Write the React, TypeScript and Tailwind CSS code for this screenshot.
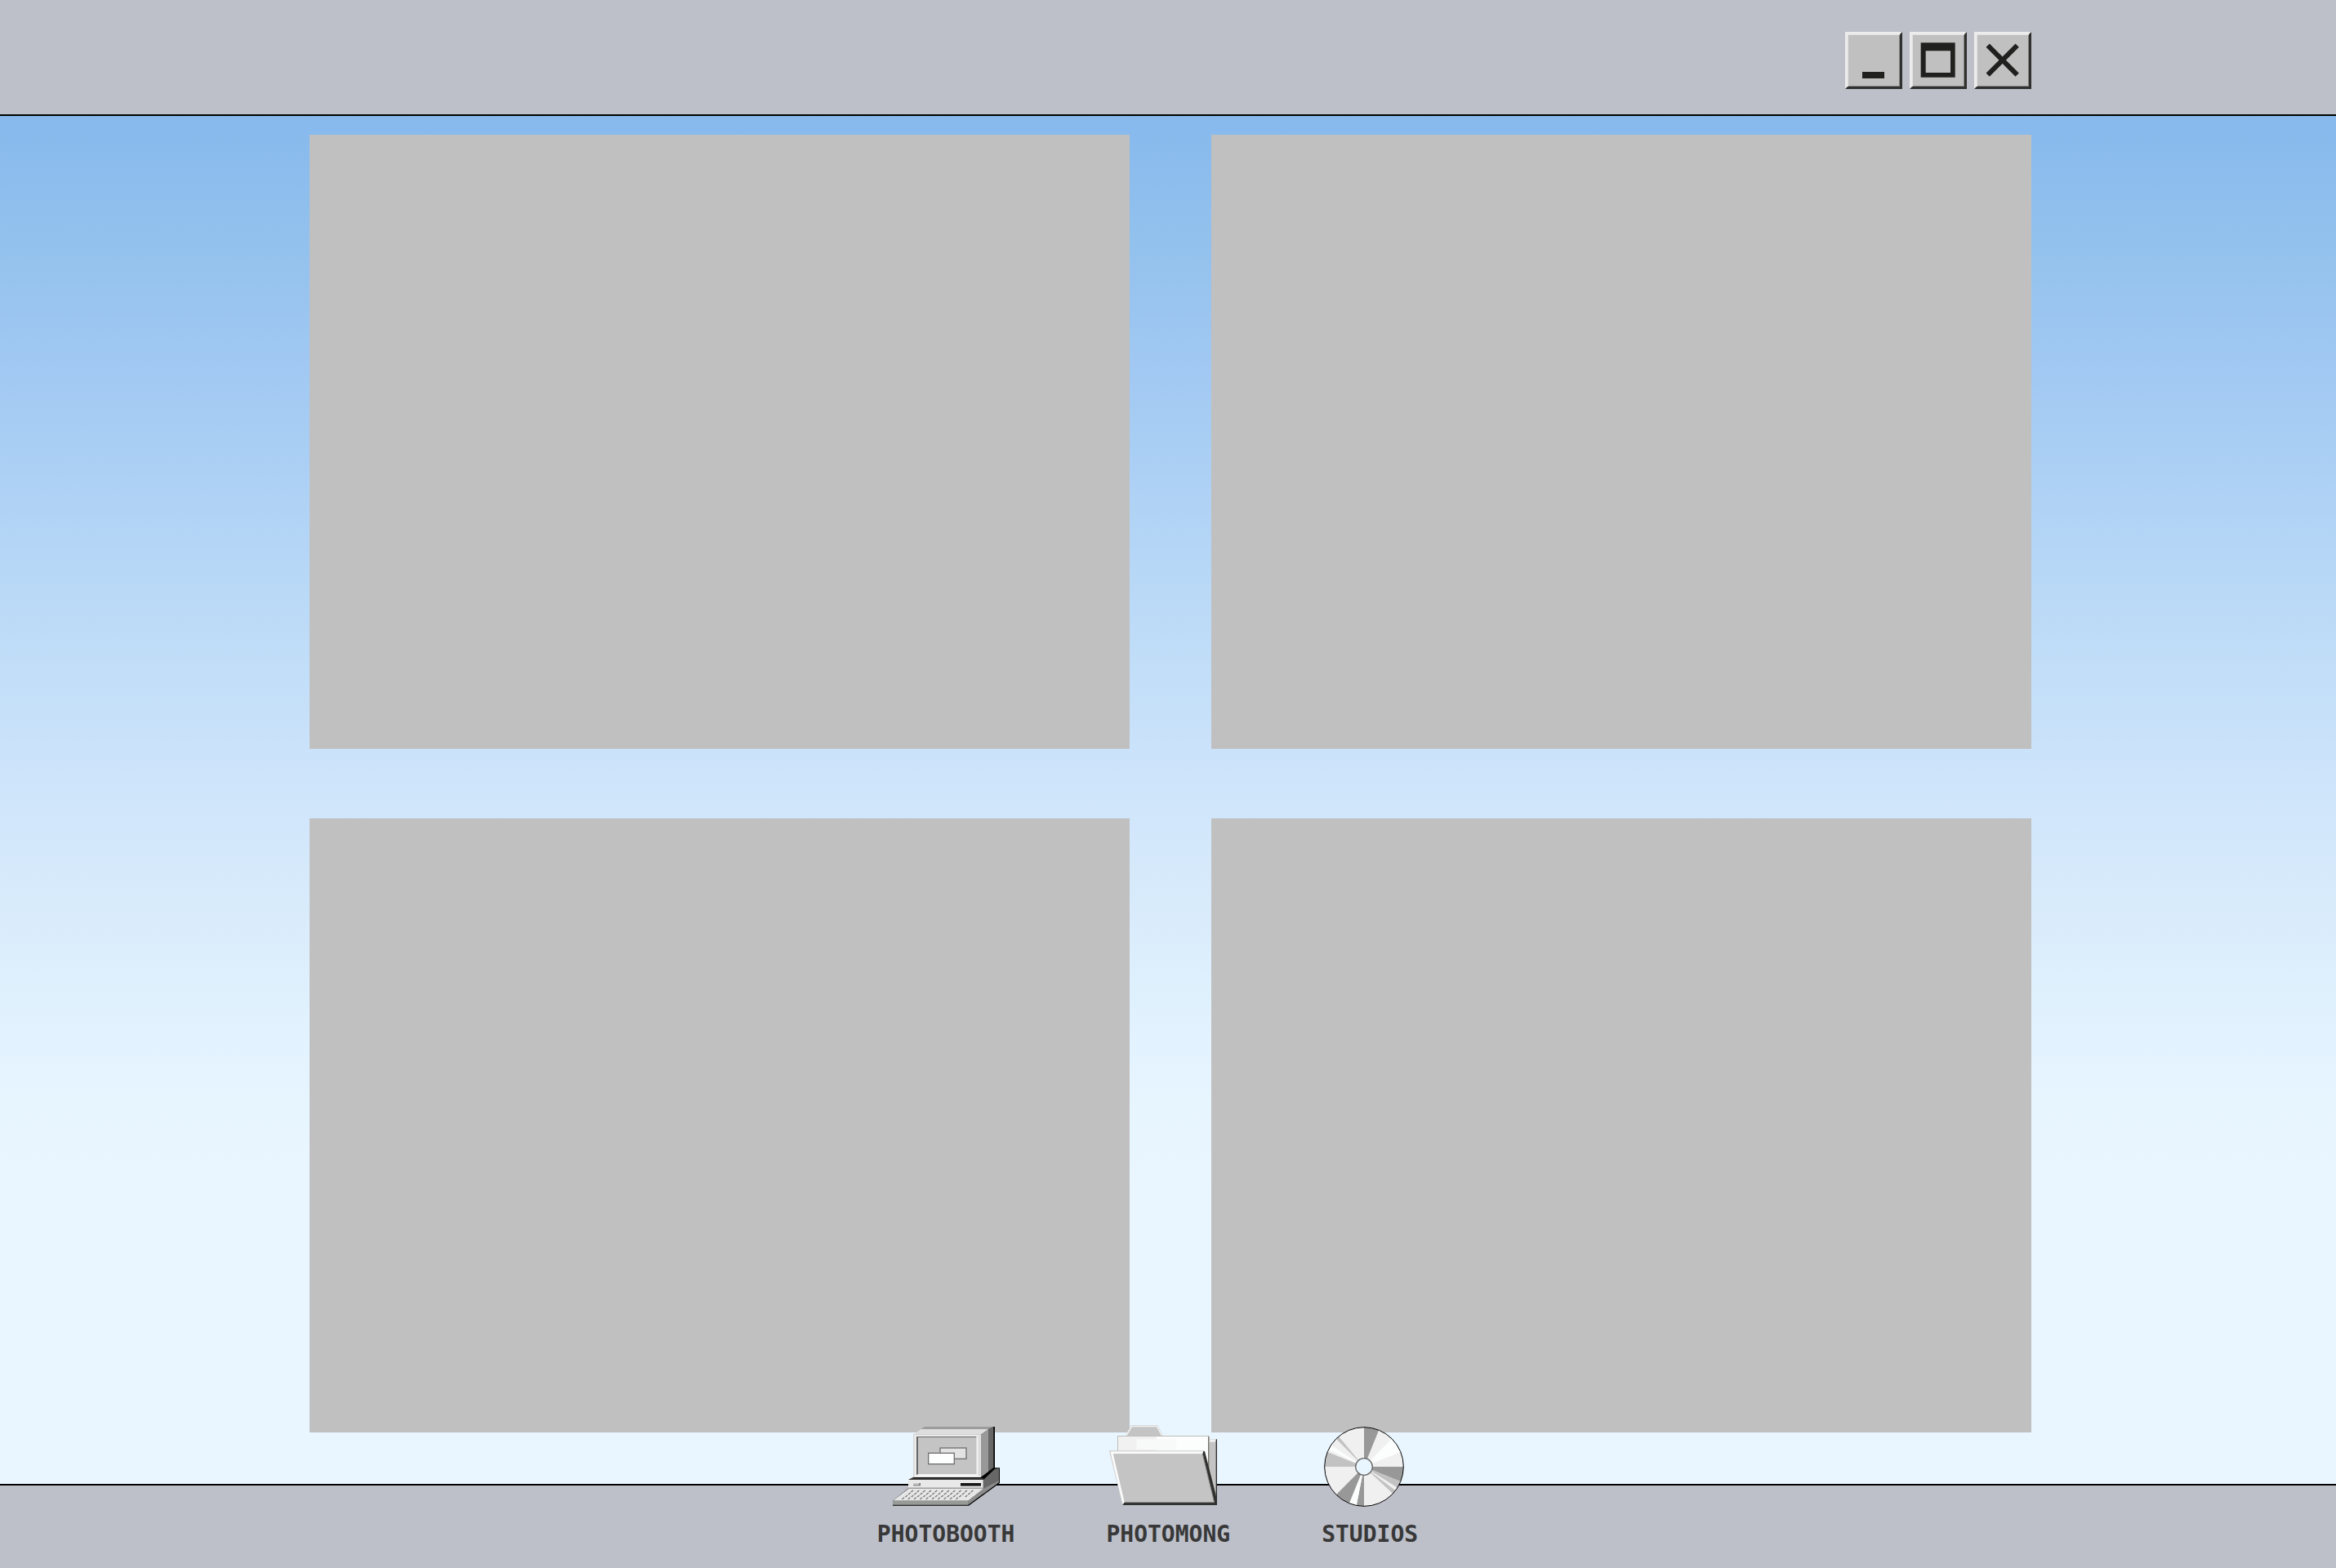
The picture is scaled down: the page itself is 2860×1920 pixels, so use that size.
import type { ReactNode } from "react";

function WindowButton({ label, children }: { label: string; children: ReactNode }) {
  return (
    <button
      type="button"
      aria-label={label}
      className="size-[70px] border-3 border-t-[#ececec] border-l-[#ececec] border-r-[#30302e] border-b-[#30302e] bg-[#c0c0c0] shadow-[inset_1px_1px_0_#e0e0e0,inset_-1px_-1px_0_#848484]"
    >
      <svg viewBox="9 9 192 192" className="block size-full" aria-hidden="true">
        {children}
      </svg>
    </button>
  );
}

const keyRows = [
  { x: 136, y: 289 },
  { x: 126, y: 298 },
  { x: 115, y: 307 },
  { x: 103, y: 315 },
];

function ComputerIcon() {
  return (
    <svg viewBox="69 45 393 300" className="h-[100px] w-[131px]" aria-hidden="true">
      {/* base */}
      <path d="M144 237 127 246V277L69 323V341H348L462 258V202H444L400 240Z" fill="#000" />
      <path d="M402 246 444 206 459 204V255L402 298Z" fill="#676767" />
      <path d="M402 278 346 323V337L402 296 459 255V250Z" fill="#8c8c8c" />
      <path d="M127 246 146 236H404L402 246Z" fill="#3c3a3a" />
      <rect x="126" y="246" width="276" height="31" fill="#e9e9e9" />
      <path d="M126 274H399V246H402V278H126Z" fill="#b8b8b8" />
      <rect x="144" y="258" width="27" height="10" fill="#777" />
      <rect x="144" y="258" width="22" height="7" fill="#c8c8c8" />
      <rect x="318" y="258" width="75" height="12" fill="#161616" />
      <rect x="318" y="267" width="75" height="3" fill="#666" />
      {/* keyboard */}
      <path d="M126 279H402L346 323H69Z" fill="#e6e6e6" />
      <path d="M69 323H346V338H69Z" fill="#989a98" />
      <path d="M346 323 402 279V296L346 338Z" fill="#8c8c8c" />
      <g stroke="#747474" strokeWidth="4">
        {keyRows.map((row) =>
          Array.from({ length: row.y > 310 ? 10 : 11 }, (_, i) => (
            <line key={`${row.y}-${i}`} x1={row.x + i * 22} y1={row.y + 2} x2={row.x + 8 + i * 22} y2={row.y - 4} />
          )),
        )}
      </g>
      {/* monitor */}
      <path d="M390 80 438 51H444V204L402 240H146V230H390Z" fill="#000" />
      <path d="M187 51H438L424 60H172Z" fill="#9c9c9c" />
      <path d="M172 60H424L392 80H146Z" fill="#dedede" />
      <path d="M392 80 420 59V216L392 237Z" fill="#989898" />
      <path d="M420 59 439 51V201L420 216Z" fill="#676767" />
      <rect x="145" y="78" width="248" height="159" fill="#ececec" />
      <path d="M145 78H393V81H148V237H145Z" fill="#cecece" />
      <path d="M376 88 391 80V236L376 224Z" fill="#dcdcdc" />
      <path d="M156 87H376V90H162V227H156Z" fill="#666" />
      <rect x="162" y="90" width="215" height="136" fill="#c4c4c4" />
      <path d="M162 226H376L385 232H150Z" fill="#f8f8f8" />
      <path d="M377 88V226L382 229V88Z" fill="#f6f6f6" />
      <rect x="243" y="129" width="96" height="40" fill="#e3e3e3" stroke="#707070" strokeWidth="4" />
      <rect x="200" y="148" width="95" height="40" fill="#fdfffe" stroke="#707070" strokeWidth="4" />
    </svg>
  );
}

function FolderIcon() {
  return (
    <svg viewBox="81 45 432 300" className="h-[100px] w-[144px]" aria-hidden="true">
      {/* back panel */}
      <path d="M445 97H477V337H130L470 330Z" fill="#2e2e2c" />
      <path d="M445 97H473V322L445 230Z" fill="#c4c4c4" />
      <path d="M445 97H474L470 107H450V112H445Z" fill="#f0f0f0" />
      {/* tab */}
      <path d="M139 87 162 45H258L281 87Z" fill="#bcbcbc" />
      <path d="M142 86 164 49H256L277 86" fill="#c4c4c4" stroke="#f2f2f2" strokeWidth="5" />
      {/* paper */}
      <path d="M111 84H449V230L430 150H111Z" fill="#bdbdb8" />
      <path d="M114 87H444V200L430 142H114Z" fill="#f1f1f1" />
      <path d="M255 87H444V200L430 142H255Z" fill="#fcfefd" />
      <path d="M182 97H328V135H182Z" fill="#f8f9f9" />
      <path d="M446 88V215" stroke="#777770" strokeWidth="4" />
      {/* front panel */}
      <path d="M81 139H430L477 325V339H130Z" fill="#c8c8c8" />
      <path d="M85 142H428L424 151H96L138 329 130 335Z" fill="#fafafa" />
      <path d="M96 151H424L466 330H138Z" fill="#c4c4c4" />
      <path d="M427 141H432L477 318V339H130L137 329H467L424 151Z" fill="#30302e" />
      <path d="M137 329H467L424 151" fill="none" stroke="#858585" strokeWidth="3" />
    </svg>
  );
}

const discWedges: [number, number, string][] = [
  [0, 22, "#989898"],
  [45, 68, "#fcfefd"],
  [90, 112, "#989898"],
  [112, 122, "#c2c2c2"],
  [127, 133, "#c2c2c2"],
  [180, 191, "#989898"],
  [191, 202, "#fcfefd"],
  [202, 225, "#989898"],
  [270, 292, "#c2c2c2"],
  [296, 303, "#fcfefd"],
  [315, 320, "#c2c2c2"],
];

function wedgePath(from: number, to: number) {
  const point = (deg: number) => {
    const a = (deg * Math.PI) / 180;
    return `${213 + 144 * Math.sin(a)} ${198 - 144 * Math.cos(a)}`;
  };
  return `M213 198L${point(from)}A144 144 0 0 1 ${point(to)}Z`;
}

function DiscIcon() {
  return (
    <svg viewBox="66 45 339 300" className="h-[100px] w-[113px]" aria-hidden="true">
      <circle cx="213" cy="198" r="145" fill="#f0f0f0" />
      {discWedges.map(([from, to, fill]) => (
        <path key={from} d={wedgePath(from, to)} fill={fill} />
      ))}
      <circle cx="213" cy="198" r="145" fill="none" stroke="#000" strokeWidth="3" />
      <circle cx="213" cy="198" r="31" fill="#e9f6ff" stroke="#686868" strokeWidth="4" />
    </svg>
  );
}

const shortcuts = [
  { label: "PHOTOBOOTH", Icon: ComputerIcon },
  { label: "PHOTOMONG", Icon: FolderIcon },
  { label: "STUDIOS", Icon: DiscIcon },
];

export default function App() {
  return (
    <div className="flex min-h-screen flex-col bg-[#bdc0c9]">
      <header className="flex justify-end gap-[9px] border-b-2 border-black pt-[39px] pr-[373px] pb-[31px]">
        <WindowButton label="Minimize">
          <rect x="63" y="147" width="81" height="24" fill="#20201f" />
        </WindowButton>
        <WindowButton label="Maximize">
          <path d="M41 40H167V167H41ZM59 70V150H150V70Z" fill="#20201f" fillRule="evenodd" />
        </WindowButton>
        <WindowButton label="Close">
          <path d="M50 50 158 158M158 50 50 158" stroke="#20201f" strokeWidth="18" />
        </WindowButton>
      </header>

      <main className="grid flex-1 grid-cols-2 content-start gap-x-[100px] gap-y-[85px] bg-[linear-gradient(to_bottom,#87b9ed_0%,#92c1ed_9%,#a0c8f2_18%,#afd2f5_28%,#bbdaf7_36%,#cae2fa_46%,#d2e7fb_52%,#daecfb_59%,#e0f1fe_65%,#e7f5ff_72%,#e9f6ff_78%)] pt-[23px] pr-[373px] pb-[63px] pl-[379px]">
        <section className="aspect-[251/188] bg-[#c0c0c0]" />
        <section className="aspect-[251/188] bg-[#c0c0c0]" />
        <section className="aspect-[251/188] bg-[#c0c0c0]" />
        <section className="aspect-[251/188] bg-[#c0c0c0]" />
      </main>

      <footer className="flex h-[103px] items-end justify-center border-t-2 border-black pr-[50px] pb-[23px]">
        <nav className="flex items-end gap-28">
          {shortcuts.map(({ label, Icon }) => (
            <a
              key={label}
              href="#"
              className="flex flex-col items-center gap-4 font-['DejaVu_Sans_Mono',monospace] text-[28px] leading-9 font-bold text-[#383838]"
            >
              <Icon />
              <span>{label}</span>
            </a>
          ))}
        </nav>
      </footer>
    </div>
  );
}
